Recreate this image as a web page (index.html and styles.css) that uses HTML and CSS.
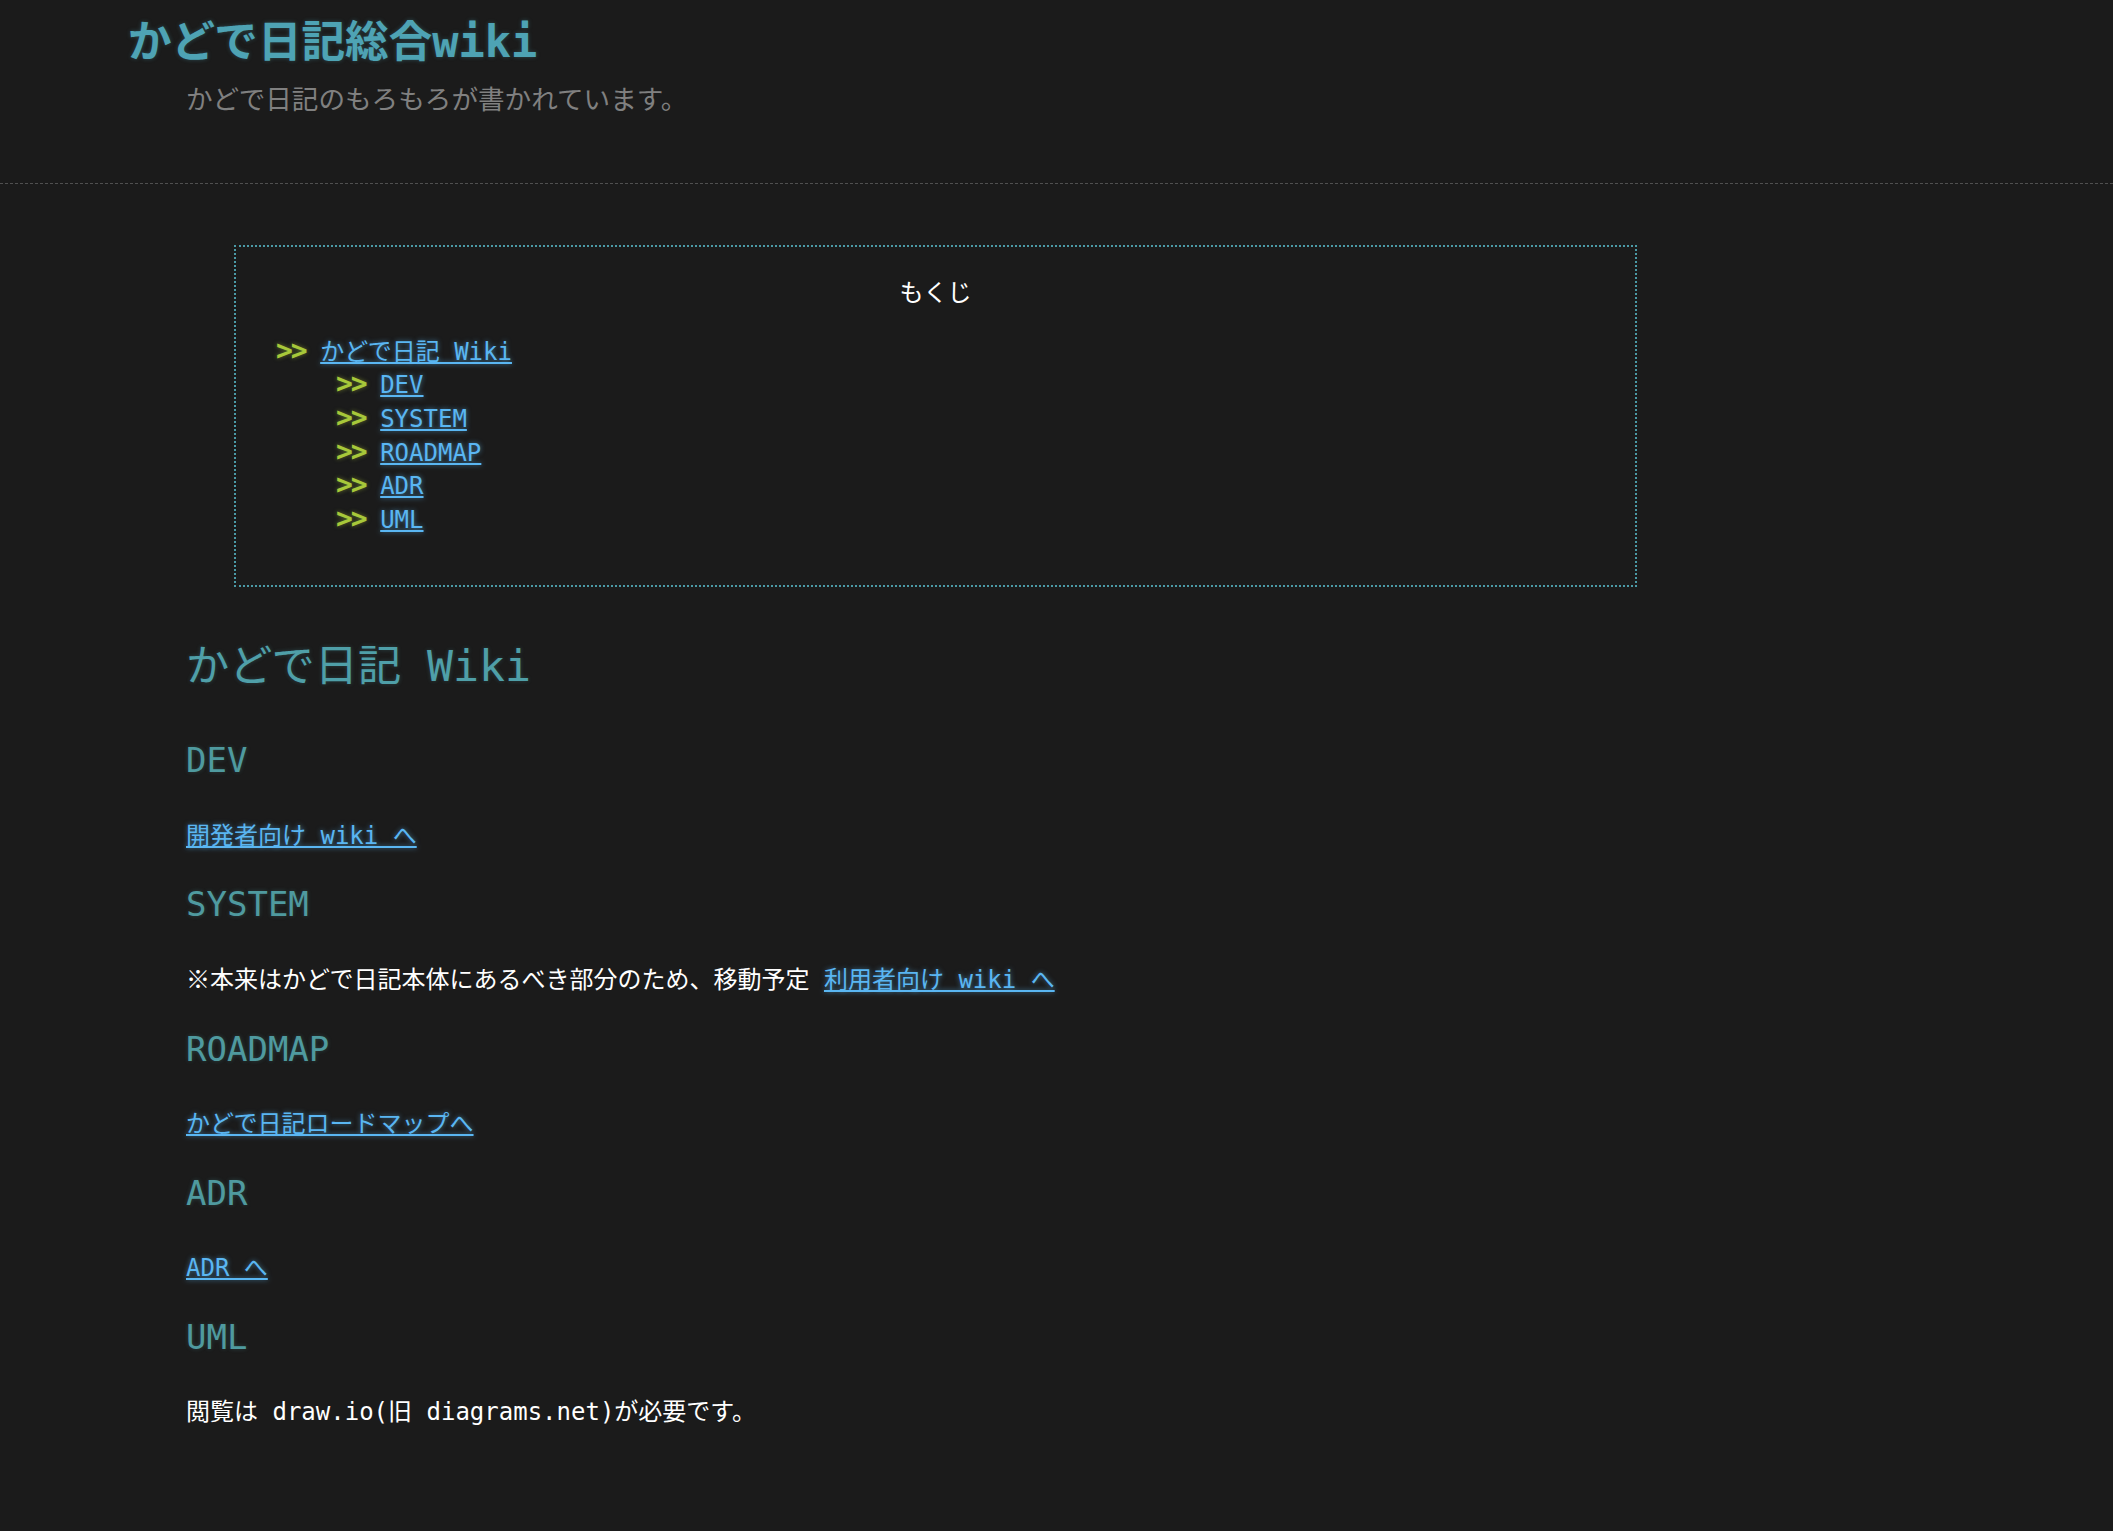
FILE: index.html
```html
<!DOCTYPE html>
<html lang="ja">
<head>
<meta charset="utf-8">
<title>かどで日記総合wiki</title>
<link rel="stylesheet" href="styles.css">
</head>
<body>
<header class="site-header">
  <h1 class="site-title">かどで日記総合wiki</h1>
  <p class="site-desc">かどで日記のもろもろが書かれています。</p>
</header>
<main class="content">
  <nav class="toc">
    <p class="toc-title">もくじ</p>
    <ul class="toc-list">
      <li><span class="mark">&gt;&gt;</span> <a href="#top">かどで日記 Wiki</a>
        <ul class="toc-sub">
          <li><span class="mark">&gt;&gt;</span> <a href="#dev">DEV</a></li>
          <li><span class="mark">&gt;&gt;</span> <a href="#system">SYSTEM</a></li>
          <li><span class="mark">&gt;&gt;</span> <a href="#roadmap">ROADMAP</a></li>
          <li><span class="mark">&gt;&gt;</span> <a href="#adr">ADR</a></li>
          <li><span class="mark">&gt;&gt;</span> <a href="#uml">UML</a></li>
        </ul>
      </li>
    </ul>
  </nav>

  <h1 class="page-title" id="top">かどで日記 Wiki</h1>

  <h2 class="sec" id="dev">DEV</h2>
  <p class="txt"><a href="#dev">開発者向け wiki へ</a></p>

  <h2 class="sec" id="system">SYSTEM</h2>
  <p class="txt">※本来はかどで日記本体にあるべき部分のため、移動予定 <a href="#system">利用者向け wiki へ</a></p>

  <h2 class="sec" id="roadmap">ROADMAP</h2>
  <p class="txt"><a href="#roadmap">かどで日記ロードマップへ</a></p>

  <h2 class="sec" id="adr">ADR</h2>
  <p class="txt"><a href="#adr">ADR へ</a></p>

  <h2 class="sec" id="uml">UML</h2>
  <p class="txt">閲覧は draw.io(旧 diagrams.net)が必要です。</p>
</main>
</body>
</html>
```

FILE: styles.css
```css
html, body {
  margin: 0;
  padding: 0;
  background: #1b1b1b;
}

body {
  font-family: "DejaVu Sans Mono", "Noto Sans CJK JP", monospace;
  font-size: 24px;
  line-height: 1.4;
  color: #ffffff;
  min-height: 1531px;
}

.site-header {
  padding: 12px 0 67px 128px;
  border-bottom: 1px dashed #505050;
}

.site-title {
  margin: 0;
  font-size: 43.6px;
  line-height: 1.4;
  font-weight: bold;
  color: #4ea3b4;
  text-shadow: 0 0 4px rgba(78, 163, 180, 0.35);
}

.site-desc {
  margin: 6px 0 0 58px;
  font-family: "Noto Sans CJK JP", sans-serif;
  font-size: 26.6px;
  line-height: 1.4;
  color: #808080;
}

.content {
  padding: 0 0 60px 186px;
}

.toc {
  box-sizing: border-box;
  width: 1403px;
  margin: 61px 0 0 48px;
  padding: 29.4px 40px 48px;
  border: 2px dotted #4b9aa6;
}

.toc-title {
  margin: 0 0 25.6px;
  text-align: center;
  color: #ffffff;
}

.toc-list, .toc-sub {
  list-style: none;
  margin: 0;
  padding: 0;
}

.toc-sub {
  padding-left: 60px;
}

.mark {
  font-size: 28px;
  line-height: 1;
  font-weight: bold;
  letter-spacing: -2px;
  color: #a7c83a;
  text-shadow: 0 0 4px rgba(167, 200, 58, 0.5);
}

a {
  color: #5ab6f2;
  text-decoration: underline;
  text-shadow: 0 0 5px rgba(90, 182, 242, 0.6);
}

.page-title {
  margin: 49px 0 0;
  font-size: 43.2px;
  line-height: 1.4;
  font-weight: normal;
  color: #4f9fa8;
  text-shadow: 0 0 4px rgba(79, 159, 168, 0.3);
}

.sec {
  margin: 28.1px 0 34.9px;
  font-size: 34px;
  line-height: 1.4;
  font-weight: normal;
  color: #4f9a9f;
  text-shadow: 0 0 4px rgba(79, 154, 159, 0.3);
}

.page-title + .sec {
  margin-top: 40.3px;
}

.txt {
  margin: 24px 0;
  color: #ffffff;
}
```
